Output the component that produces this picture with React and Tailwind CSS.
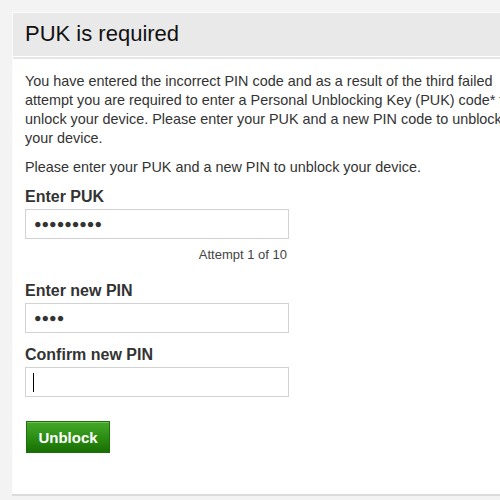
import React from 'react';

const Field = ({ label, value, cursor, className = '' }) => (
  <div className={className}>
    <label className="block text-[16px] font-bold leading-[19px] text-[#333]">{label}</label>
    <div className="mt-[3px] flex h-[30px] w-[264px] items-center border border-[#d2d2d2] bg-white px-[8px]">
      {value ? <span className="text-[12.5px] leading-none text-[#333]">{value}</span> : null}
      {cursor ? <span className="ml-[-1px] h-[19px] w-px bg-black" /> : null}
    </div>
  </div>
);

export default function App() {
  return (
    <div className="min-h-[500px] w-[500px] overflow-hidden bg-[#f3f3f3] pl-[12px] pt-[12px] font-['Liberation_Sans',Arial,sans-serif]">
      <div className="w-[520px] border-t border-l border-[#fbfbfb] shadow-[0_2px_0_#dcdcdc]">
        <div className="flex h-[44px] items-center border-b border-white bg-[#e9e9e9] pb-[3px] pl-[12px]">
          <h1 className="text-[22px] font-normal text-[#111]">PUK is required</h1>
        </div>
        <div className="border-t-2 border-[#e6e6e6] bg-white px-[12px] pb-[41px] pt-[13px] text-[14.4px] leading-[19px] text-[#333]">
          <p className="w-[505px]">
            You have entered the incorrect PIN code and as a result of the third failed attempt you are
            required to enter a Personal Unblocking Key (PUK) code* to unlock your device. Please enter
            your PUK and a new PIN code to unblock your device.
          </p>
          <p className="mt-[10px]">Please enter your PUK and a new PIN to unblock your device.</p>

          <Field className="mt-[10px]" label="Enter PUK" value="●●●●●●●●●" />
          <div className="mt-[7px] w-[262px] text-right text-[13px] leading-[18px] text-[#444]">Attempt 1 of 10</div>

          <Field className="mt-[17px]" label="Enter new PIN" value="●●●●" />
          <Field className="mt-[12px]" label="Confirm new PIN" cursor />

          <button
            type="button"
            className="ml-[1px] mt-[24px] h-[32px] w-[84px] border border-[#1f6d0c] bg-gradient-to-b from-[#45a82a] via-[#2c8f14] to-[#176f02] text-[15px] font-bold text-white shadow-[inset_0_1px_0_#6cc250]"
          >
            Unblock
          </button>
        </div>
      </div>
    </div>
  );
}
